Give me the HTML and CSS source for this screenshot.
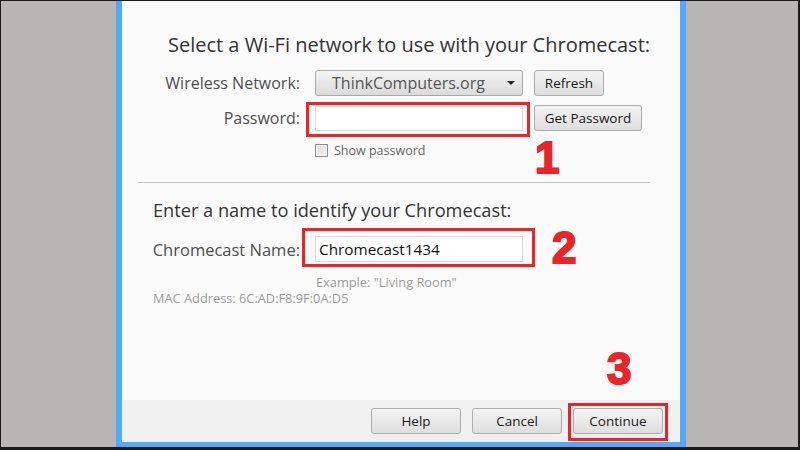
FILE: index.html
```html
<!DOCTYPE html>
<html lang="en">

<head>
    <meta charset="UTF-8">
    <title>Chromecast Setup</title>
    <link rel="stylesheet" href="styles.css">
</head>

<body>
    <div class="screen">
        <div class="window">
            <div class="main">
                <h2 class="heading heading-wifi">Select a Wi-Fi network to use with your Chromecast:</h2>

                <div class="row row-network">
                    <span class="label">Wireless Network:</span>
                    <div class="select">
                        <span>ThinkComputers.org</span>
                        <span class="arrow"></span>
                    </div>
                    <button class="btn btn-refresh">Refresh</button>
                </div>

                <div class="row row-password">
                    <span class="label">Password:</span>
                    <div class="mark mark-password">
                        <input class="field field-password" type="password">
                    </div>
                    <button class="btn btn-getpass">Get Password</button>
                </div>

                <label class="check">
                    <span class="box"></span>
                    Show password
                </label>

                <hr class="sep">

                <h2 class="heading heading-name">Enter a name to identify your Chromecast:</h2>

                <div class="row row-name">
                    <span class="label">Chromecast Name:</span>
                    <div class="mark mark-name">
                        <input class="field field-name" type="text" value="Chromecast1434">
                    </div>
                </div>

                <div class="hint">Example: "Living Room"</div>
                <div class="mac">MAC Address: 6C:AD:F8:9F:0A:D5</div>
            </div>

            <div class="footer">
                <button class="btn btn-footer">Help</button>
                <button class="btn btn-footer">Cancel</button>
                <div class="mark mark-continue">
                    <button class="btn btn-footer">Continue</button>
                </div>
            </div>

            <!-- so buoc chu thich -->
            <span class="step step-1">1</span>
            <span class="step step-2">2</span>
            <span class="step step-3">3</span>
        </div>
    </div>
</body>

</html>
```

FILE: styles.css
```css
* {
    box-sizing: border-box;
}

body {
    margin: 0;
    font-family: "Open Sans", "Liberation Sans", sans-serif;
}

.screen {
    width: 800px;
    height: 450px;
    background: #b9b5b4;
    border-style: solid;
    border-color: #1b1b1b;
    border-width: 1px 2px 3px 1px;
    padding-left: 115px;
}

.window {
    position: relative;
    width: 570px;
    height: 446px;
    border: solid #53a9f6;
    border-width: 0 6px 5px 6px;
    display: flex;
    flex-direction: column;
}

.main {
    flex: 1;
    background: #fafafa;
    padding-top: 32px;
}

.heading {
    margin: 0;
    font-weight: normal;
    line-height: 24px;
    color: #333;
}

.heading-wifi {
    font-size: 20px;
    text-align: center;
    padding-left: 16px;
}

.heading-name {
    font-size: 18.2px;
    margin-top: 15px;
    padding-left: 31px;
}

.row {
    display: flex;
    align-items: center;
    height: 26px;
}

.row-network {
    margin-top: 13px;
}

.row-password {
    margin-top: 9px;
}

.row-name {
    margin-top: 14px;
}

.label {
    width: 178px;
    margin-right: 15px;
    text-align: right;
    font-size: 16px;
    color: #4e4e4e;
}

.row-name .label {
    font-size: 16.5px;
}

.select {
    width: 208px;
    height: 26px;
    margin-right: 11px;
    display: flex;
    align-items: center;
    justify-content: space-between;
    padding: 0 7px 0 16px;
    border: 1px solid #a9a9a9;
    border-radius: 3px;
    background: linear-gradient(#f4f4f4, #e6e6e6 55%, #dadada);
    font-size: 16px;
    color: #555;
}

.arrow {
    width: 0;
    height: 0;
    border-left: 4px solid transparent;
    border-right: 4px solid transparent;
    border-top: 4px solid #222;
}

.btn {
    height: 26px;
    padding: 0 12px;
    border: 1px solid #acacac;
    border-radius: 3px;
    background: linear-gradient(#f3f3f3, #e9e9e9 50%, #dedede);
    font-family: inherit;
    font-size: 13.5px;
    color: #1a1a1a;
}

.btn-refresh {
    width: 70px;
    padding: 0;
}

.btn-getpass {
    width: 108px;
    margin-left: 11px;
    padding: 0;
}

.field {
    display: block;
    width: 208px;
    height: 25px;
    border: 1px solid #dadada;
    background: #fff;
    font-family: inherit;
    outline: none;
}

.field-name {
    height: 26px;
    padding: 0 3px;
    font-size: 15.3px;
    color: #111;
}

/* khung do chu thich */
.mark {
    position: relative;
}

.mark::after {
    content: "";
    position: absolute;
    border: 3px solid #e8262a;
}

.mark-password::after {
    left: -9px;
    right: -7px;
    top: -4px;
    bottom: -6px;
}

.mark-name::after {
    left: -13px;
    right: -12px;
    top: -8px;
    bottom: -5px;
}

.mark-continue::after {
    left: -5px;
    right: -5px;
    top: -5px;
    bottom: -7px;
}

.check {
    display: flex;
    align-items: center;
    margin: 10px 0 0 193px;
    height: 18px;
    font-size: 12.5px;
    color: #666;
}

.box {
    width: 13px;
    height: 13px;
    margin-right: 6px;
    border: 1px solid #8e8e8e;
    background: linear-gradient(135deg, #dcdcdc, #f6f6f6);
    box-shadow: inset 0 0 0 1px #f4f4f4;
}

.sep {
    margin: 23px 30px 0 16px;
    border: none;
    border-top: 1px solid #c2c2c2;
}

.hint {
    margin: 12px 0 0 194px;
    line-height: 16px;
    font-size: 12.8px;
    color: #9a9a9a;
}

.mac {
    padding-left: 31px;
    line-height: 16px;
    font-size: 12.8px;
    color: #9a9a9a;
}

.footer {
    height: 42px;
    background: #f0f0f0;
    display: flex;
    justify-content: flex-end;
    align-items: flex-start;
    gap: 11px;
    padding: 8px 17px 0 0;
}

.btn-footer {
    width: 90px;
    padding: 0;
}

.step {
    position: absolute;
    font-family: "Liberation Sans", Arial, sans-serif;
    font-weight: bold;
    font-size: 44px;
    line-height: 44px;
    color: #e8262a;
    -webkit-text-stroke: 2px #e8262a;
}

.step-1 {
    left: 413px;
    top: 135px;
}

.step-2 {
    left: 430px;
    top: 225px;
}

.step-3 {
    left: 485px;
    top: 346px;
}
```
